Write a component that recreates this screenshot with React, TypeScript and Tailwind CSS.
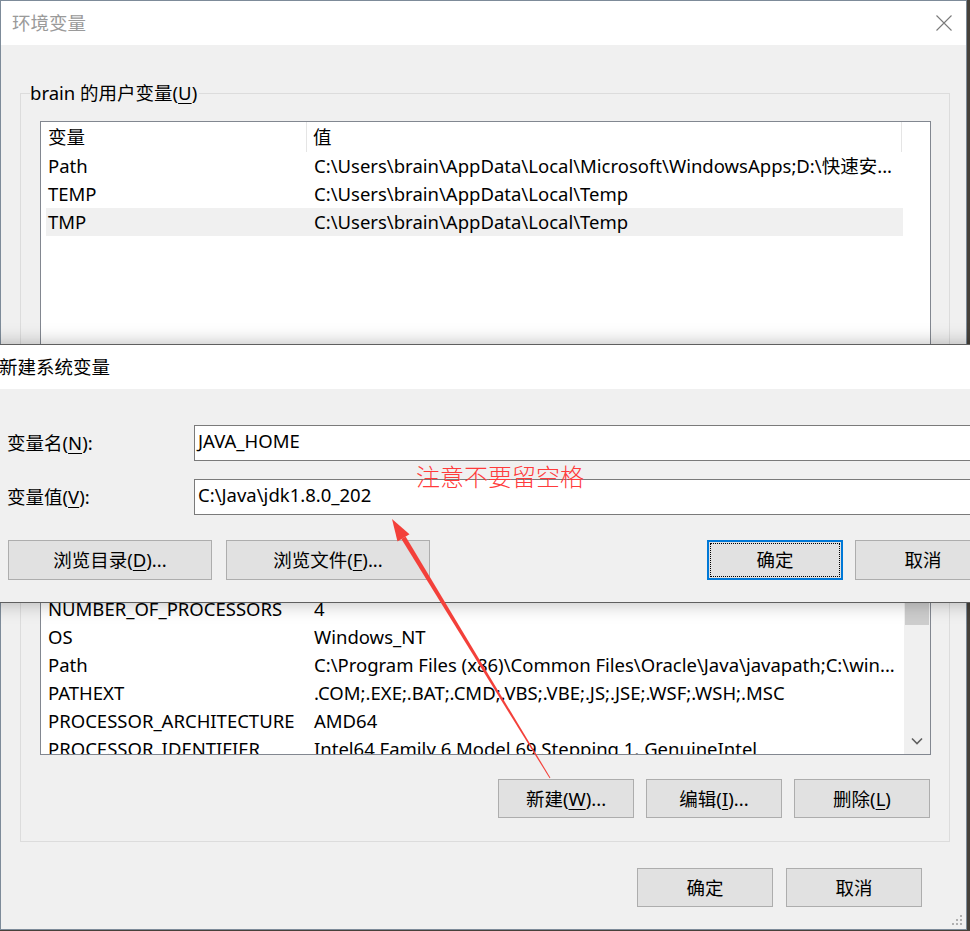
import type { ReactNode } from 'react';

type Row = { name: string; value: string; selected?: boolean };

const userVars: Row[] = [
  { name: 'Path', value: 'C:\\Users\\brain\\AppData\\Local\\Microsoft\\WindowsApps;D:\\快速安...' },
  { name: 'TEMP', value: 'C:\\Users\\brain\\AppData\\Local\\Temp' },
  { name: 'TMP', value: 'C:\\Users\\brain\\AppData\\Local\\Temp', selected: true },
];

const systemVars: Row[] = [
  { name: 'ComSpec', value: 'C:\\WINDOWS\\system32\\cmd.exe' },
  { name: 'DriverData', value: 'C:\\Windows\\System32\\Drivers\\DriverData' },
  { name: 'NUMBER_OF_PROCESSORS', value: '4' },
  { name: 'OS', value: 'Windows_NT' },
  { name: 'Path', value: 'C:\\Program Files (x86)\\Common Files\\Oracle\\Java\\javapath;C:\\win...' },
  { name: 'PATHEXT', value: '.COM;.EXE;.BAT;.CMD;.VBS;.VBE;.JS;.JSE;.WSF;.WSH;.MSC' },
  { name: 'PROCESSOR_ARCHITECTURE', value: 'AMD64' },
  { name: 'PROCESSOR_IDENTIFIER', value: 'Intel64 Family 6 Model 69 Stepping 1, GenuineIntel' },
  { name: 'PROCESSOR_LEVEL', value: '6' },
];

function Btn({ children, focused, className = '' }: { children: ReactNode; focused?: boolean; className?: string }) {
  return (
    <button
      className={`h-[39px] flex items-center justify-center bg-[#e1e1e1] text-black ${
        focused
          ? 'border-2 border-[#0078d7] outline-1 outline-dotted outline-black outline-offset-[-4px]'
          : 'border border-[#adadad]'
      } ${className}`}
    >
      {children}
    </button>
  );
}

function Key({ k }: { k: string }) {
  return <span className="underline underline-offset-[3px] decoration-1">{k}</span>;
}

function VarRows({ rows }: { rows: Row[] }) {
  return (
    <div className="ml-[5px] w-[857px]">
      {rows.map(r => (
        <div
          key={r.name}
          className={`grid grid-cols-[261px_1fr] h-[28px] items-center whitespace-nowrap ${r.selected ? 'bg-[#f0f0f0]' : ''}`}
        >
          <span className="pl-[2px] overflow-hidden">{r.name}</span>
          <span className="pl-[7px] overflow-hidden">{r.value}</span>
        </div>
      ))}
    </div>
  );
}

function ListHeader() {
  return (
    <div className="flex h-[30px] items-center">
      <div className="w-[266px] h-full pl-[7px] flex items-center border-r border-[#e5e5e5]">变量</div>
      <div className="w-[595px] h-full pl-[6px] flex items-center border-r border-[#e5e5e5]">值</div>
    </div>
  );
}

function GroupBox({ label, children, className = '' }: { label: ReactNode; children: ReactNode; className?: string }) {
  return (
    <div className={`relative w-[930px] ml-[19px] border border-[#dcdcdc] pt-[27px] pl-[19px] ${className}`}>
      <span className="absolute left-[9px] top-[-13px] leading-[24px] bg-[#f0f0f0] pr-[2px]">{label}</span>
      {children}
    </div>
  );
}

function ButtonRow({ items }: { items: ReactNode[] }) {
  return (
    <div className="flex justify-end gap-[12px] w-[890px] mt-[24px]">
      {items.map((it, i) => (
        <Btn key={i} className="w-[136px]">{it}</Btn>
      ))}
    </div>
  );
}

export default function App() {
  return (
    <div className="relative w-[970px] h-[931px] overflow-hidden bg-[#46413a] text-[18.5px] text-black font-['Noto_Sans','Noto_Sans_CJK_SC',sans-serif]">
      {/* 环境变量 window */}
      <div className="relative w-[967px] h-[930px] border border-[#7d8b99] bg-[#f0f0f0] flex flex-col">
        <div className="h-[44px] bg-white flex items-center justify-between pl-[11px] pr-[13px]">
          <span className="text-[#9a9a9a] leading-none">环境变量</span>
          <svg width="16" height="16" viewBox="0 0 16 16" className="mr-[1px]">
            <path d="M0.5 0.5 L15.5 15.5 M15.5 0.5 L0.5 15.5" stroke="#7a7a7a" strokeWidth="1.1" fill="none" />
          </svg>
        </div>

        <GroupBox label={<>brain 的用户变量(<Key k="U" />)</>} className="mt-[48px] pb-[22px]">
          <div className="w-[891px] h-[252px] border border-[#828790] bg-white overflow-hidden">
            <ListHeader />
            <VarRows rows={userVars} />
          </div>
          <ButtonRow items={[<>新建(<Key k="N" />)...</>, <>编辑(<Key k="E" />)...</>, <>删除(<Key k="D" />)</>]} />
        </GroupBox>

        <GroupBox label={<>系统变量(<Key k="S" />)</>} className="mt-[21px] pb-[23px]">
          <div className="w-[891px] h-[247px] border border-[#828790] bg-white overflow-hidden flex">
            <div className="flex-1 overflow-hidden">
              <ListHeader />
              <VarRows rows={systemVars} />
            </div>
            <div className="w-[26px] bg-[#f0f0f0] flex flex-col">
              <div className="h-[26px]" />
              <div className="mt-[26px] h-[64px] mx-[1px] bg-[#cdcdcd]" />
              <div className="flex-1" />
              <div className="h-[27px] flex items-center justify-center">
                <svg width="12" height="8" viewBox="0 0 12 8">
                  <path d="M1 1.5 L6 6.5 L11 1.5" stroke="#606060" strokeWidth="1.6" fill="none" />
                </svg>
              </div>
            </div>
          </div>
          <ButtonRow items={[<>新建(<Key k="W" />)...</>, <>编辑(<Key k="I" />)...</>, <>删除(<Key k="L" />)</>]} />
        </GroupBox>

        <div className="flex justify-end gap-[13px] mt-[26px] pr-[44px]">
          <Btn className="w-[136px]">确定</Btn>
          <Btn className="w-[136px]">取消</Btn>
        </div>

        <svg width="12" height="12" viewBox="0 0 12 12" className="absolute right-[3px] bottom-[3px]">
          {[
            [9, 1], [9, 5], [5, 5], [9, 9], [5, 9], [1, 9],
          ].map(([x, y]) => (
            <rect key={`${x}-${y}`} x={x} y={y} width="2" height="2" fill="#b0b0b0" />
          ))}
        </svg>
      </div>

      {/* 新建系统变量 dialog */}
      <div className="absolute top-[344px] left-[-17px] w-[1033px] border-y border-[#5f5f5f] shadow-[0_0_18px_rgba(0,0,0,0.28)]">
        <div className="h-[44px] bg-white flex items-center pl-[16px]">新建系统变量</div>
        <div className="bg-[#f0f0f0] pt-[36px] px-[25px] pb-[22px]">
          <div className="grid grid-cols-[186px_1fr] gap-y-[18px] items-center">
            <span className="-ml-[1px]">变量名(<Key k="N" />):</span>
            <div className="h-[36px] border border-[#7a7a7a] bg-white flex items-center pl-[3px] pb-[5px] whitespace-nowrap">JAVA_HOME</div>
            <span className="-ml-[1px]">变量值(<Key k="V" />):</span>
            <div className="h-[36px] border border-[#7a7a7a] bg-white flex items-center pl-[3px] pb-[5px] whitespace-nowrap">
              {'C:\\Java\\jdk1.8.0_202'}
            </div>
          </div>
          <div className="flex justify-between mt-[25px]">
            <div className="flex gap-[14px]">
              <Btn className="w-[204px] h-[40px]">浏览目录(<Key k="D" />)...</Btn>
              <Btn className="w-[204px] h-[40px]">浏览文件(<Key k="F" />)...</Btn>
            </div>
            <div className="flex gap-[12px]">
              <Btn focused className="w-[136px] h-[40px]">确定</Btn>
              <Btn className="w-[136px] h-[40px]">取消</Btn>
            </div>
          </div>
        </div>
      </div>

      {/* annotation */}
      <span className="absolute left-[416px] top-[461px] leading-[29px] text-[24px] font-light text-[#ff3b3b] font-['Noto_Sans_CJK_SC',sans-serif] whitespace-nowrap">
        注意不要留空格
      </span>
      <svg width="970" height="931" viewBox="0 0 970 931" className="absolute inset-0 pointer-events-none">
        <polygon
          points="549.6,778.3 550.4,777.7 405.6,536.5 401.4,539.1"
          fill="#f3403a"
        />
        <polygon points="392,519 397.5,541.4 409.5,534.2" fill="#f3403a" />
      </svg>
    </div>
  );
}
